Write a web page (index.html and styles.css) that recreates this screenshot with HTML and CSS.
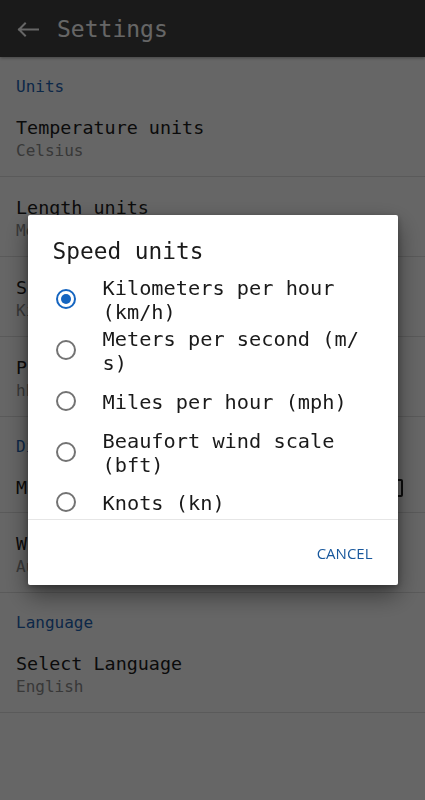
FILE: index.html
```html
<!DOCTYPE html>
<html lang="en">
<head>
<meta charset="utf-8">
<title>Settings</title>
<link rel="stylesheet" href="styles.css">
</head>
<body>
<div class="app">
  <header class="toolbar">
    <svg class="back" width="24" height="24" viewBox="0 0 24 24" aria-hidden="true">
      <path d="M2 12.5H21M2 12.5L8 6.5M2 12.5L8 18.5" fill="none" stroke="#fff" stroke-width="2" stroke-linecap="square"/>
    </svg>
    <h1 class="toolbar-title">Settings</h1>
  </header>

  <main class="prefs">
    <div class="cat">Units</div>
    <div class="pref"><div class="pref-title">Temperature units</div><div class="pref-sum">Celsius</div></div>
    <div class="pref"><div class="pref-title">Length units</div><div class="pref-sum">Meters</div></div>
    <div class="pref"><div class="pref-title">Speed units</div><div class="pref-sum">Kilometers per hour</div></div>
    <div class="pref"><div class="pref-title">Pressure units</div><div class="pref-sum">hPa</div></div>

    <div class="cat">Display</div>
    <div class="pref pref-single"><div class="pref-title">Material theme</div><span class="checkbox"></span></div>
    <div class="pref"><div class="pref-title">Widget updates</div><div class="pref-sum">Automatic</div></div>

    <div class="cat">Language</div>
    <div class="pref"><div class="pref-title">Select Language</div><div class="pref-sum">English</div></div>
  </main>
</div>

<div class="scrim">
  <div class="dialog" role="dialog">
    <div class="dialog-title">Speed units</div>
    <div class="options">
      <div class="option"><span class="radio checked"></span><span class="opt-text">Kilometers per hour (km/h)</span></div>
      <div class="option"><span class="radio"></span><span class="opt-text">Meters per second (m/<wbr>s)</span></div>
      <div class="option"><span class="radio"></span><span class="opt-text">Miles per hour (mph)</span></div>
      <div class="option"><span class="radio"></span><span class="opt-text">Beaufort wind scale (bft)</span></div>
      <div class="option"><span class="radio"></span><span class="opt-text">Knots (kn)</span></div>
    </div>
    <div class="dialog-actions">
      <button class="btn">CANCEL</button>
    </div>
  </div>
</div>
</body>
</html>
```

FILE: styles.css
```css
* { box-sizing: border-box; }

html, body {
  margin: 0;
  padding: 0;
  background: #fff;
}

body {
  width: 425px;
  height: 800px;
  overflow: hidden;
  font-family: "DejaVu Sans Mono", "Liberation Mono", monospace;
  color: #212121;
}

.toolbar {
  height: 57px;
  background: #424242;
  display: flex;
  align-items: center;
  padding-left: 17px;
  box-shadow: 0 1px 3px rgba(0,0,0,0.35);
  position: relative;
}

.back {
  width: 24px;
  height: 24px;
  flex: none;
}

.toolbar-title {
  margin: 0 0 0 16px;
  font-weight: normal;
  font-size: 23px;
  line-height: 28px;
  color: #fff;
}

.prefs {
  display: flex;
  flex-direction: column;
}

.cat {
  height: 40px;
  padding: 20px 0 0 16px;
  font-size: 16px;
  line-height: 20px;
  color: #1e64b4;
}

.pref {
  height: 80px;
  padding: 19px 22px 0 16px;
  border-bottom: 1px solid #e0e0e0;
  position: relative;
}

.pref-single {
  height: 56px;
  display: flex;
  align-items: flex-start;
  justify-content: space-between;
}

.pref-title {
  font-size: 18.4px;
  line-height: 24px;
  color: #1c1c1c;
  white-space: nowrap;
}

.pref-sum {
  font-size: 16px;
  line-height: 22px;
  color: #8c8c8c;
  white-space: nowrap;
}

.checkbox {
  width: 18px;
  height: 18px;
  border: 2px solid #202020;
  border-radius: 2px;
  margin-top: 3px;
  flex: none;
}

.scrim {
  position: fixed;
  inset: 0;
  background: rgba(0,0,0,0.6);
  display: flex;
  align-items: center;
  justify-content: center;
}

.dialog {
  width: 370px;
  height: 370px;
  background: #fff;
  border-radius: 2px;
  box-shadow: 0 10px 24px rgba(0,0,0,0.45), 0 2px 6px rgba(0,0,0,0.3);
  display: flex;
  flex-direction: column;
  overflow: hidden;
}

.dialog-title {
  padding: 22px 25px 0 25px;
  font-size: 22.8px;
  line-height: 28px;
  color: #1a1a1a;
  flex: none;
}

.options {
  flex: 1;
  overflow: hidden;
  padding-top: 9px;
}

.option {
  min-height: 50.75px;
  display: flex;
  align-items: center;
  padding: 0 33px 0 28px;
}

.radio {
  width: 20px;
  height: 20px;
  border: 2px solid #737373;
  border-radius: 50%;
  flex: none;
  margin-right: 27px;
  display: flex;
  align-items: center;
  justify-content: center;
}

.radio.checked {
  border-color: #1565c0;
}

.radio.checked::after {
  content: "";
  width: 10px;
  height: 10px;
  border-radius: 50%;
  background: #1565c0;
}

.opt-text {
  font-size: 20.3px;
  line-height: 24px;
  color: #1a1a1a;
  padding-top: 2px;
}

.dialog-actions {
  flex: none;
  height: 66px;
  border-top: 1px solid #e6e6e6;
  display: flex;
  align-items: center;
  justify-content: flex-end;
  padding-right: 17px;
}

.btn {
  background: none;
  border: none;
  padding: 8px 8px;
  font-family: "Open Sans", "Roboto", sans-serif;
  font-size: 15px;
  line-height: 20px;
  color: #17579c;
  cursor: pointer;
}
```
